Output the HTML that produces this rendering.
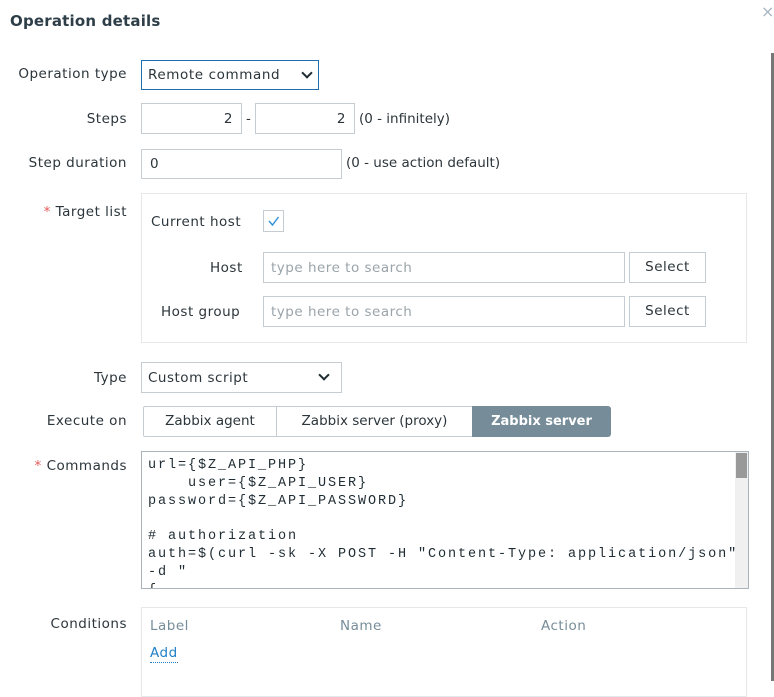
<!DOCTYPE html>
<html><head><meta charset="utf-8"><style>
*{box-sizing:border-box;margin:0;padding:0}
body{width:774px;height:681px;background:#fff;position:relative;overflow:hidden;font-family:"DejaVu Sans","Liberation Sans",sans-serif;font-size:13.5px;letter-spacing:0.5px;color:#2b353b}
.a{position:absolute;white-space:nowrap}
.lbl{position:absolute;right:647px;text-align:right;white-space:nowrap}
.box{position:absolute;border:1px solid #c6cdd2;background:#fff}
.ph{color:#9aa4aa}
.star{color:#e45959}
.btn{position:absolute;border:1px solid #c6cdd2;background:#fff;text-align:center;line-height:29px}
.chev{position:absolute;width:8px;height:8px;border-right:2.5px solid #1f2c33;border-bottom:2.5px solid #1f2c33;transform:rotate(45deg)}
</style></head><body>
<div class="a" style="left:10px;top:12px;font-size:15px;font-weight:bold;color:#2d3e48;letter-spacing:0.2px">Operation details</div>
<div class="a" style="left:761px;top:2px;color:#a9b6c0;font-size:16px">×</div>
<div class="a" style="left:771px;top:53px;width:3px;height:628px;background:#777"></div>

<div class="lbl" style="top:66px">Operation type</div>
<div class="box" style="left:141px;top:60px;width:178px;height:30px;border:1px solid #1f6db0;padding:6px 6px;letter-spacing:0.6px">Remote command<div class="chev" style="left:161px;top:8px"></div></div>

<div class="lbl" style="top:111px">Steps</div>
<div class="box" style="left:141px;top:103px;width:101px;height:31px;text-align:right;padding:7px 8px">2</div>
<div class="a" style="left:246px;top:111px">-</div>
<div class="box" style="left:255px;top:103px;width:100px;height:31px;text-align:right;padding:7px 8px">2</div>
<div class="a" style="left:359px;top:111px;letter-spacing:0">(0 - infinitely)</div>

<div class="lbl" style="top:155px">Step duration</div>
<div class="box" style="left:141px;top:149px;width:201px;height:30px;padding:6px 8px">0</div>
<div class="a" style="left:346px;top:155px;letter-spacing:0">(0 - use action default)</div>

<div class="lbl" style="top:204px"><span class="star">* </span>Target list</div>
<div class="box" style="left:141px;top:193px;width:606px;height:150px;border-color:#e4e8eb"></div>
<div class="a" style="left:151px;top:214px">Current host</div>
<div class="box" style="left:263px;top:210px;width:21px;height:22px"><svg width="19" height="20" style="position:absolute;left:0;top:0"><path d="M5 10 L8.5 14 L14.5 6" fill="none" stroke="#2a8fd8" stroke-width="1.4"/></svg></div>
<div class="a" style="left:210px;top:260px">Host</div>
<div class="box ph" style="left:263px;top:252px;width:362px;height:31px;padding:7px 7px">type here to search</div>
<div class="btn" style="left:629px;top:252px;width:77px;height:31px">Select</div>
<div class="a" style="left:161px;top:304px">Host group</div>
<div class="box ph" style="left:263px;top:296px;width:362px;height:31px;padding:7px 7px">type here to search</div>
<div class="btn" style="left:629px;top:296px;width:77px;height:31px">Select</div>

<div class="lbl" style="top:370px">Type</div>
<div class="box" style="left:141px;top:362px;width:201px;height:31px;padding:7px 6px">Custom script<div class="chev" style="left:178px;top:8px"></div></div>

<div class="lbl" style="top:413px">Execute on</div>
<div class="box" style="left:143px;top:406px;width:134px;height:31px;text-align:center;line-height:29px;border-radius:2px 0 0 2px;letter-spacing:0">Zabbix agent</div>
<div class="box" style="left:276px;top:406px;width:197px;height:31px;text-align:center;line-height:29px;letter-spacing:0">Zabbix server (proxy)</div>
<div class="box" style="left:472px;top:406px;width:139px;height:31px;text-align:center;line-height:29px;background:#768d99;border-color:#768d99;color:#fff;border-radius:0 3px 3px 0;font-weight:bold;letter-spacing:0;font-size:13px">Zabbix server</div>

<div class="lbl" style="top:458px"><span class="star">* </span>Commands</div>
<div class="box" style="left:141px;top:451px;width:608px;height:138px;border-color:#a9b3b9;overflow:hidden">
<pre style="position:absolute;left:6px;top:5px;font-family:'Liberation Mono',monospace;font-size:13.5px;letter-spacing:1.9px;line-height:17.8px;color:#1f2c33">url={$Z_API_PHP}
    user={$Z_API_USER}
password={$Z_API_PASSWORD}

# authorization
auth=$(curl -sk -X POST -H "Content-Type: application/json"
-d "
{</pre>
<div style="position:absolute;right:0;top:0;width:13px;height:136px;background:#f0f0f0"></div>
<div style="position:absolute;right:1px;top:1px;width:11px;height:25px;background:#999"></div>
</div>

<div class="lbl" style="top:616px">Conditions</div>
<div class="box" style="left:141px;top:607px;width:606px;height:90px;border-color:#e4e8eb"></div>
<div class="a" style="left:150px;top:618px;color:#768d99">Label</div>
<div class="a" style="left:340px;top:618px;color:#768d99">Name</div>
<div class="a" style="left:541px;top:618px;color:#768d99">Action</div>
<div class="a" style="left:150px;top:645px;color:#1f80c8;border-bottom:1px dotted #1f80c8;line-height:17px">Add</div>
</body></html>
